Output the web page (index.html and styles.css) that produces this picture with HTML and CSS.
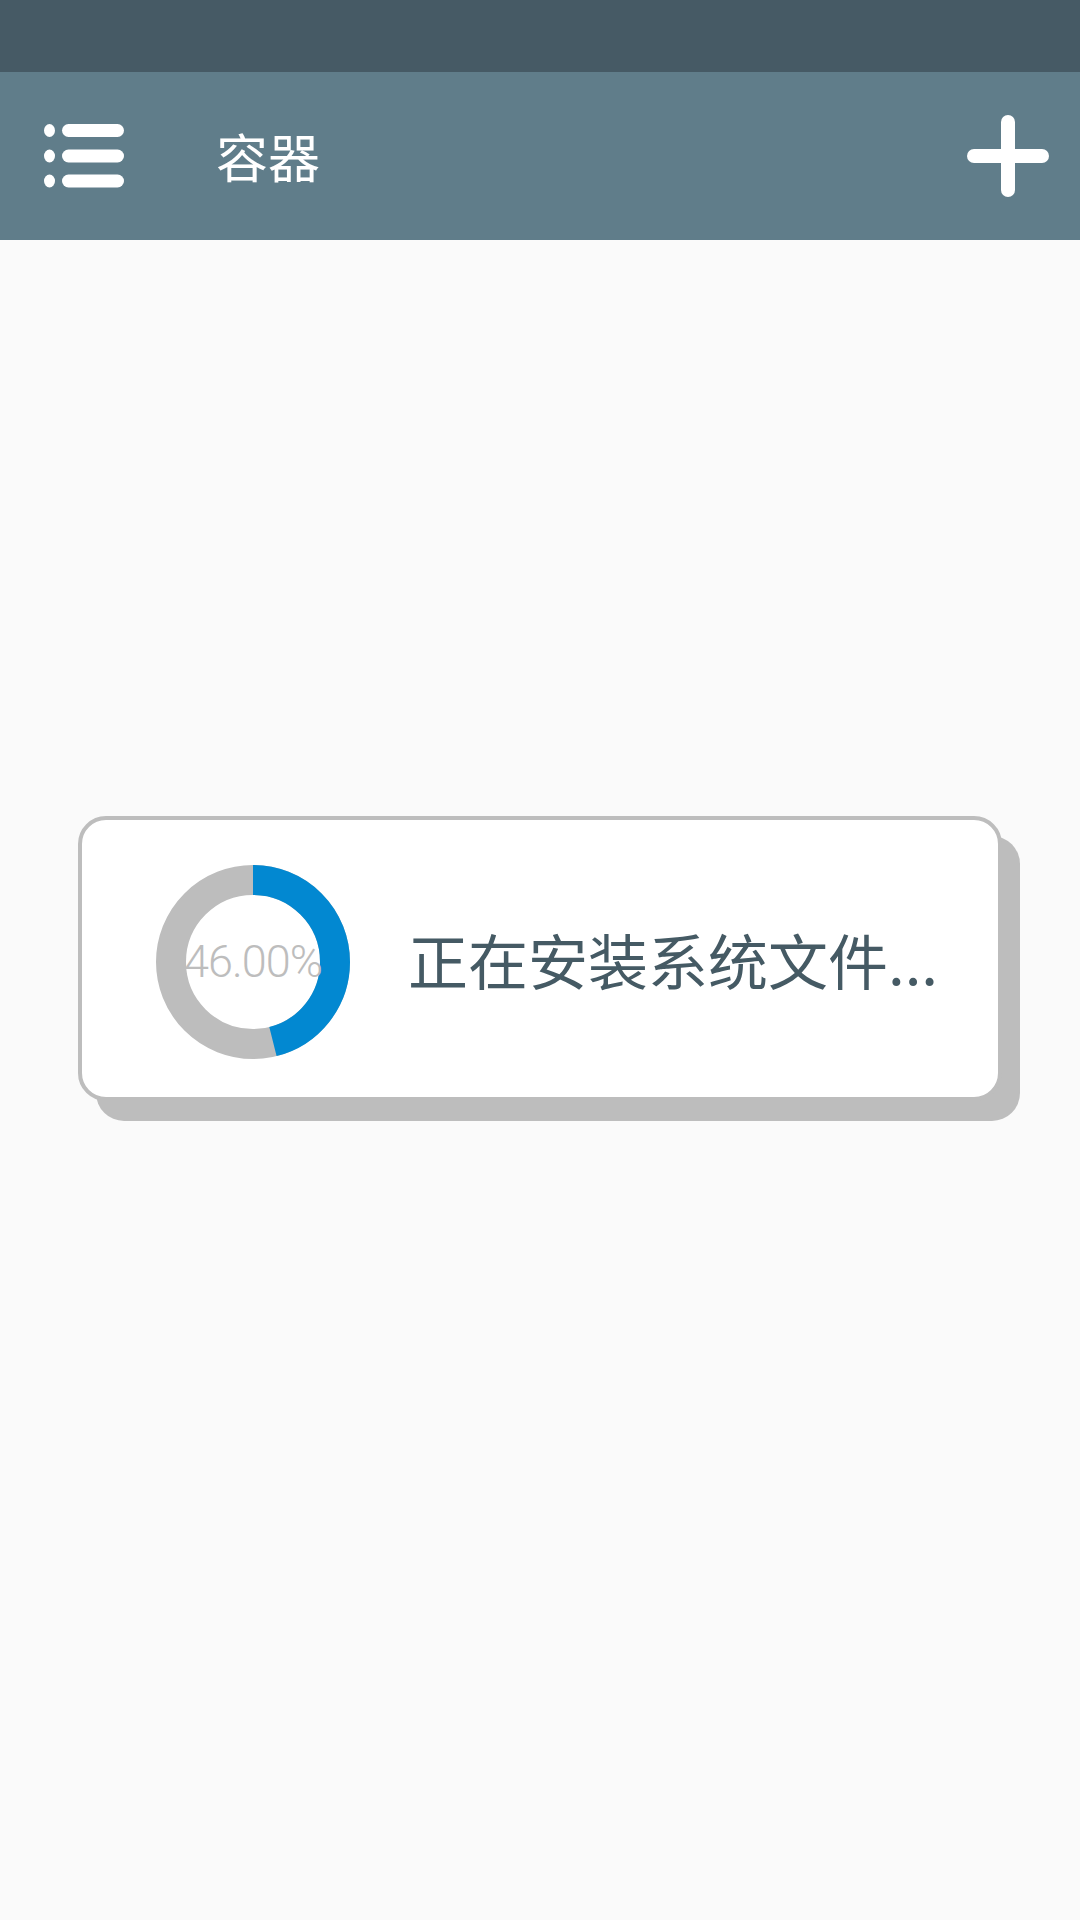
FILE: index.html
```html
<!DOCTYPE html>
<html lang="zh-CN">
<head>
<meta charset="utf-8">
<title>容器</title>
<link rel="stylesheet" href="styles.css">
</head>
<body>
<div class="app">
  <div class="status-bar"></div>
  <header class="toolbar">
    <svg class="menu-icon" width="80" height="64" viewBox="0 0 80 64">
      <g fill="#ffffff">
        <ellipse cx="5.5" cy="6.5" rx="5.5" ry="6.5"/>
        <ellipse cx="5.5" cy="32" rx="5.5" ry="6.5"/>
        <ellipse cx="5.5" cy="57" rx="5.5" ry="6.5"/>
        <rect x="18" y="0" width="62" height="13" rx="6.5"/>
        <rect x="18" y="25.5" width="62" height="13" rx="6.5"/>
        <rect x="18" y="50.5" width="62" height="13" rx="6.5"/>
      </g>
    </svg>
    <div class="title">容器</div>
    <svg class="add-icon" width="82" height="82" viewBox="0 0 82 82">
      <g stroke="#ffffff" stroke-width="14" stroke-linecap="round">
        <line x1="41" y1="7" x2="41" y2="75"/>
        <line x1="7" y1="41" x2="75" y2="41"/>
      </g>
    </svg>
  </header>
  <main class="content">
    <div class="card">
      <div class="ring">
        <svg width="194" height="194" viewBox="0 0 194 194">
          <circle cx="97" cy="97" r="82" fill="none" stroke="#bdbdbd" stroke-width="30"/>
          <circle cx="97" cy="97" r="82" fill="none" stroke="#0288d1" stroke-width="30"
                  stroke-dasharray="237 515.22" transform="rotate(-90 97 97)"/>
        </svg>
        <span class="percent">46.00%</span>
      </div>
      <div class="message">正在安装系统文件...</div>
    </div>
  </main>
</div>
</body>
</html>
```

FILE: styles.css
```css
html, body {
  margin: 0;
  padding: 0;
}
body {
  width: 1080px;
  height: 1920px;
  background: #fafafa;
  font-family: Roboto, "Noto Sans CJK SC", sans-serif;
  overflow: hidden;
}
.app {
  display: flex;
  flex-direction: column;
  height: 1920px;
}
.status-bar {
  height: 72px;
  background: #465a65;
  flex: none;
}
.toolbar {
  height: 168px;
  flex: none;
  background: #607d8a;
  display: flex;
  align-items: center;
  padding-left: 44px;
  padding-right: 31px;
  box-sizing: border-box;
}
.menu-icon {
  display: block;
  flex: none;
}
.title {
  margin-left: 92px;
  color: #ffffff;
  font-family: "Noto Sans CJK SC", sans-serif;
  font-size: 52px;
  line-height: 1;
  flex: 1;
}
.add-icon {
  display: block;
  flex: none;
}
.content {
  flex: 1;
  background: #fafafa;
  padding-top: 576px;
}
.card {
  margin-left: 78px;
  width: 924px;
  height: 285px;
  box-sizing: border-box;
  background: #ffffff;
  border: 4px solid #bdbdbd;
  border-radius: 28px;
  box-shadow: 18px 20px 0 #bdbdbd;
  display: flex;
  align-items: center;
  padding-left: 74px;
}
.ring {
  display: grid;
  width: 194px;
  height: 194px;
  flex: none;
  margin-top: 6px;
}
.ring svg,
.ring .percent {
  grid-area: 1 / 1;
}
.ring svg {
  display: block;
}
.percent {
  align-self: center;
  justify-self: center;
  color: #bdbdbd;
  font-family: Roboto, sans-serif;
  font-weight: 300;
  font-size: 45px;
  line-height: 1;
  letter-spacing: -1px;
  white-space: nowrap;
}
.message {
  margin-left: 58px;
  color: #455a64;
  font-family: "Noto Sans CJK SC", sans-serif;
  font-size: 60px;
  line-height: 1;
  white-space: nowrap;
}
```
